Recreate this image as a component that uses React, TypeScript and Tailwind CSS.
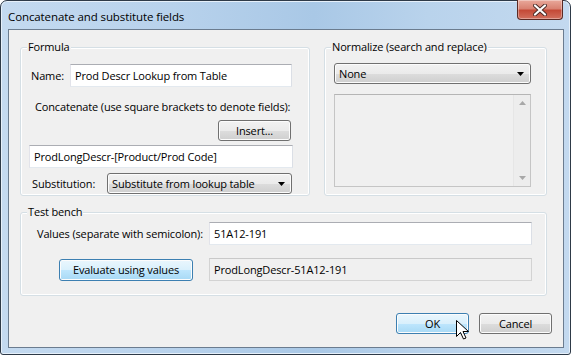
import React from 'react';

const btn =
  'h-[21px] rounded-[3px] border border-[#707070] bg-[linear-gradient(180deg,#f2f2f2_0%,#ebebeb_50%,#dddddd_51%,#cfcfcf_100%)] shadow-[inset_0_0_0_1px_#fcfcfc] flex items-center justify-center text-black shrink-0';
const btnHot =
  'h-[21px] rounded-[3px] border border-[#3c7fb1] bg-[linear-gradient(180deg,#eaf6fd_0%,#d9f0fc_50%,#bee6fd_51%,#a7d9f5_100%)] shadow-[inset_0_0_0_1px_#fcfcfc] flex items-center justify-center text-black shrink-0';
const input =
  'h-[23px] border border-[#abadb3] border-b-[#e3e9ef] border-l-[#e2e3ea] border-r-[#dbdfe6] bg-white flex items-center px-[4px] text-black shrink-0';

const Combo: React.FC<{ text: string; className: string }> = ({ text, className }) => (
  <div
    className={`h-[21px] rounded-[3px] border border-[#707070] bg-[linear-gradient(180deg,#f2f2f2_0%,#ebebeb_50%,#dddddd_51%,#cfcfcf_100%)] shadow-[inset_0_0_0_1px_#fcfcfc] flex items-center pl-[4px] pr-[6px] shrink-0 ${className}`}
  >
    <span className="flex-1">{text}</span>
    <svg width="7" height="4" viewBox="0 0 7 4">
      <path d="M0 0h7L3.5 4z" fill="#000" />
    </svg>
  </div>
);

const Group: React.FC<{ title: string; className: string; children: React.ReactNode }> = ({ title, className, children }) => (
  <div className={`relative rounded-[3px] border border-[#d5dfe5] shadow-[inset_0_0_0_1px_#ffffff] ${className}`}>
    <span className="absolute -top-[9px] left-[6px] bg-[#f0f0f0] px-[1px] leading-[15px]">{title}</span>
    {children}
  </div>
);

export default function App() {
  return (
    <div className="w-[571px] h-[355px] bg-white font-['Segoe_UI','Open_Sans',sans-serif] text-[11px] tracking-[-0.15px] leading-[15px] text-black whitespace-nowrap">
      <div className="relative w-full h-full flex flex-col rounded-t-[7px] rounded-b-[3px] border border-[#2e3a48] bg-[linear-gradient(90deg,#c4daf0_0%,#b8d2ec_30%,#a9c8e6_55%,#b9d3ec_75%,#c3d9ef_100%)] shadow-[inset_0_0_0_1px_#e6f0fa]">
        {/* title bar */}
        <div className="h-[28px] flex items-start pl-[7px] pr-[7px]">
          <span className="mt-[8px] text-[11.5px] tracking-[-0.1px] text-black">Concatenate and substitute fields</span>
          <div className="ml-auto -mt-[1px] w-[46px] h-[20px] rounded-b-[4px] border border-[#5b2a24] border-t-0 bg-[linear-gradient(180deg,#e9a99b_0%,#d98272_45%,#c44a37_55%,#d2705e_100%)] shadow-[inset_0_0_0_1px_rgba(255,255,255,0.35)] flex items-center justify-center">
            <svg width="14" height="12" viewBox="0 0 14 12">
              <path d="M2 1.5l10 9M12 1.5l-10 9" stroke="#4a2a26" strokeWidth="4" strokeLinecap="round" />
              <path d="M2 1.5l10 9M12 1.5l-10 9" stroke="#ffffff" strokeWidth="2.2" strokeLinecap="round" />
            </svg>
          </div>
        </div>

        {/* client area */}
        <div className="flex-1 ml-[7px] mr-[6px] mb-[6px] border border-[#6b7c8f] bg-[#f0f0f0] pl-[11px] pt-[17px] flex flex-col">
          <div className="flex gap-[14px]">
            <Group title="Formula" className="w-[290px] h-[149px] flex flex-col">
              <div className="flex items-center mt-[16px] pl-[10px]">
                <span className="w-[39px] shrink-0">Name:</span>
                <div className={`${input} w-[222px]`}>Prod Descr Lookup from Table</div>
              </div>
              <span className="mt-[12px] pl-[14px]">Concatenate (use square brackets to denote fields):</span>
              <div className={`${btn} self-end mr-[18px] mt-[6px] w-[73px] h-[20px]`}>Insert...</div>
              <div className={`${input} ml-[8px] mt-[4px] w-[264px]`}>ProdLongDescr-[Product/Prod Code]</div>
              <div className="flex items-center mt-[5px] pl-[11px]">
                <span className="w-[75px] shrink-0">Substitution:</span>
                <Combo text="Substitute from lookup table" className="w-[185px]" />
              </div>
            </Group>

            <Group title="Normalize (search and replace)" className="w-[223px] h-[149px] flex flex-col pl-[9px]">
              <Combo text="None" className="mt-[15px] w-[197px]" />
              <div className="mt-[10px] w-[197px] h-[93px] border border-[#c5c5c5] border-t-[#b5b5b5] bg-[#f0f0f0] flex justify-end">
                <div className="w-[17px] h-full border-l border-[#e6e6e6] bg-[#ededed] flex flex-col items-center justify-between py-[6px]">
                  <svg width="7" height="4" viewBox="0 0 7 4">
                    <path d="M0 4h7L3.5 0z" fill="#a8a8a8" />
                  </svg>
                  <svg width="7" height="4" viewBox="0 0 7 4">
                    <path d="M0 0h7L3.5 4z" fill="#a8a8a8" />
                  </svg>
                </div>
              </div>
            </Group>
          </div>

          <Group title="Test bench" className="mt-[16px] w-[527px] h-[84px] flex flex-col">
            <div className="flex items-center mt-[9px] pl-[16px]">
              <span className="w-[172px] shrink-0">Values (separate with semicolon):</span>
              <div className={`${input} w-[323px]`}>51A12-191</div>
            </div>
            <div className="flex items-center mt-[13px] pl-[38px]">
              <div className={`${btnHot} w-[134px] h-[22px]`}>Evaluate using values</div>
              <div className="ml-[16px] w-[323px] h-[23px] shrink-0 border border-[#d3d3d3] border-t-[#c9c9c9] bg-[#f0f0f0] flex items-center px-[4px]">
                ProdLongDescr-51A12-191
              </div>
            </div>
          </Group>

          <div className="flex justify-end gap-[10px] mt-[17px] pr-[11px]">
            <div className={`${btnHot} w-[73px]`}>OK</div>
            <div className={`${btn} w-[73px]`}>Cancel</div>
          </div>
        </div>

        {/* mouse pointer */}
        <svg className="absolute left-[455px] top-[319px]" width="13" height="20" viewBox="0 0 13 20">
          <path d="M0.5 0.5v16l4-4 3 6.5 2.5-1-3-6.5h5.5z" fill="#fff" stroke="#000" strokeWidth="1" strokeLinejoin="round" />
        </svg>
      </div>
    </div>
  );
}
